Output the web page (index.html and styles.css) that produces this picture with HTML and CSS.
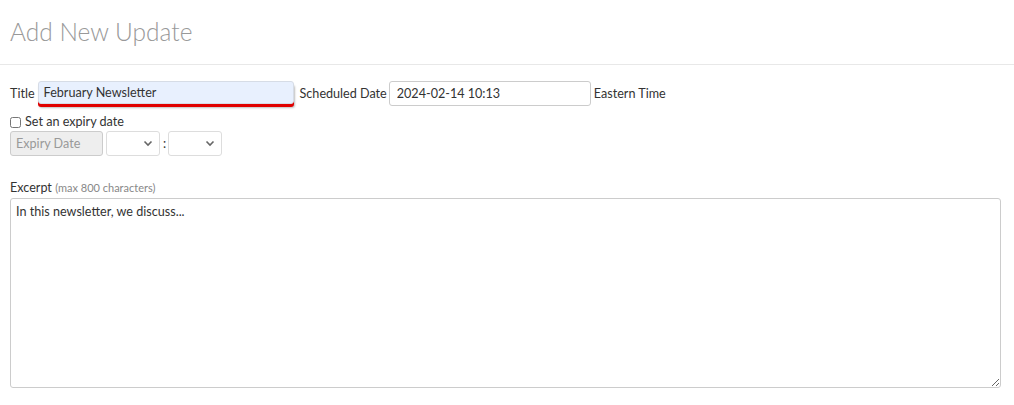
FILE: index.html
```html
<!DOCTYPE html>
<html>
<head>
<meta charset="utf-8">
<link rel="stylesheet" href="styles.css">
</head>
<body>
<div class="header">
  <h1 class="page-title">Add New Update</h1>
</div>
<div class="content">
  <div class="row row-main">
    <label class="lbl" for="title">Title</label>
    <input id="title" class="field field-title" type="text" value="February Newsletter">
    <label class="lbl lbl-sched" for="sched">Scheduled Date</label>
    <input id="sched" class="field field-date" type="text" value="2024-02-14 10:13">
    <span class="lbl lbl-tz">Eastern Time</span>
  </div>
  <div class="row row-check">
    <input type="checkbox" id="exp" class="chk">
    <label for="exp" class="lbl">Set an expiry date</label>
  </div>
  <div class="row row-expiry">
    <input class="field field-expiry" type="text" placeholder="Expiry Date" disabled>
    <span class="sel"><span class="chev"><svg width="10" height="7" viewBox="0 0 10 7"><path d="M1.5 1.5 L5 5 L8.5 1.5" fill="none" stroke="#666" stroke-width="1.6"/></svg></span></span>
    <span class="colon">:</span>
    <span class="sel"><span class="chev"><svg width="10" height="7" viewBox="0 0 10 7"><path d="M1.5 1.5 L5 5 L8.5 1.5" fill="none" stroke="#666" stroke-width="1.6"/></svg></span></span>
  </div>
  <div class="excerpt">
    <div class="lbl">Excerpt <span class="hint">(max 800 characters)</span></div>
    <textarea class="area">In this newsletter, we discuss...</textarea>
  </div>
</div>
</body>
</html>
```

FILE: styles.css
```css
html, body {
  margin: 0;
  padding: 0;
  background: #fff;
}
body {
  font-family: Lato, "Open Sans", sans-serif;
  font-size: 12.6px;
  color: #333;
}
.header {
  height: 65px;
  border-bottom: 1px solid #e8e8e8;
  box-sizing: border-box;
  padding: 17px 10px 0;
}
.page-title {
  margin: 0;
  font-weight: 300;
  font-size: 24.5px;
  line-height: 30px;
  color: #999;
}
.content {
  padding: 15px 13px 0 10px;
}
.row {
  display: flex;
  align-items: center;
}
.row-main {
  height: 26px;
}
.lbl {
  color: #333;
}
.field {
  font-family: Lato, sans-serif;
  font-size: 12.6px;
  color: #333;
  box-sizing: border-box;
  border: 1px solid #ccc;
  border-radius: 3px;
  padding: 0 7px;
  height: 25px;
  outline: none;
}
.field-title {
  margin-left: 3px;
  width: 256px;
  height: 23px;
  padding: 0 5px;
  background: #e8f0fe;
  border-color: #d6dce6;
  box-shadow: 0 3px 0 #e00000, 1px 4px 2px rgba(0,0,0,0.25);
  margin-top: -1px;
}
.lbl-sched {
  margin-left: 6px;
}
.field-date {
  margin-left: 2px;
  width: 202px;
}
.lbl-tz {
  margin-left: 3px;
}
.row-check {
  margin-top: 7px;
  height: 16px;
}
.chk {
  margin: 2px 4px 0 0;
  width: 11px;
  height: 11px;
}
.row-expiry {
  margin-top: 2px;
  height: 25px;
}
.field-expiry {
  width: 93px;
  background: #eee;
  border-color: #ccc;
  padding: 0 5px;
}
.field-expiry::placeholder {
  color: #999;
}
.sel {
  box-sizing: border-box;
  height: 25px;
  width: 54px;
  margin-left: 3px;
  border: 1px solid #ddd;
  border-radius: 3px;
  display: flex;
  align-items: center;
  justify-content: flex-end;
  padding-right: 6px;
}
.chev {
  display: flex;
}
.colon {
  margin-left: 3px;
  margin-right: 2px;
}
.colon + .sel {
  margin-left: 0;
}
.excerpt {
  margin-top: 24px;
}
.hint {
  font-size: 11px;
  color: #888;
}
.area {
  display: block;
  box-sizing: border-box;
  margin-top: 3px;
  width: 991px;
  height: 190px;
  border: 1px solid #ccc;
  border-radius: 3px;
  font-family: Lato, sans-serif;
  font-size: 12.6px;
  color: #333;
  padding: 5px 5px;
  resize: both;
  outline: none;
}
```
